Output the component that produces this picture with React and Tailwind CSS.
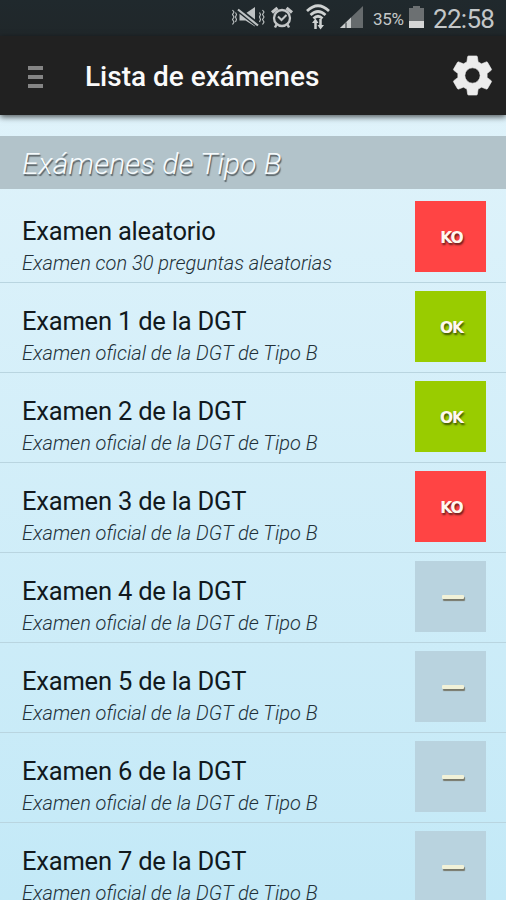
const exams = [
  { title: "Examen aleatorio", detail: "Examen con 30 preguntas aleatorias", result: "KO" },
  { title: "Examen 1 de la DGT", detail: "Examen oficial de la DGT de Tipo B", result: "OK" },
  { title: "Examen 2 de la DGT", detail: "Examen oficial de la DGT de Tipo B", result: "OK" },
  { title: "Examen 3 de la DGT", detail: "Examen oficial de la DGT de Tipo B", result: "KO" },
  { title: "Examen 4 de la DGT", detail: "Examen oficial de la DGT de Tipo B", result: null },
  { title: "Examen 5 de la DGT", detail: "Examen oficial de la DGT de Tipo B", result: null },
  { title: "Examen 6 de la DGT", detail: "Examen oficial de la DGT de Tipo B", result: null },
  { title: "Examen 7 de la DGT", detail: "Examen oficial de la DGT de Tipo B", result: null },
];

function MutedIcon() {
  return (
    <svg width="34" height="22" viewBox="0 0 34 22" fill="none" stroke="#bfc3c4">
      <path d="M1.500 3l1.500 2-1.500 2.500 1.500 2.500-1.500 2.500 1.500 2.500-1.500 2.500M4.500 5.500l1 2-1 2.500 1 2.500-1 2.500" strokeWidth="1.100" />
      <path d="M28.500 5.500l1 2-1 2.500 1 2.500-1 2.500M31.500 3l1.500 2-1.500 2.500 1.500 2.500-1.500 2.500 1.500 2.500-1.500 2.500" strokeWidth="1.100" />
      <path d="M8.500 6.500h6l9.500-6.500v19.500l-9.500-6h-6z" fill="#bfc3c4" stroke="none" />
      <path d="M6.500 2L27.500 18.500" stroke="#20292d" strokeWidth="5" />
      <path d="M7 2.500L27 18.500" strokeWidth="2.200" />
    </svg>
  );
}

function AlarmIcon() {
  return (
    <svg width="24" height="24" viewBox="0 0 24 24" fill="none" stroke="#c3c6c7" strokeWidth="2">
      <circle cx="12" cy="13" r="8" strokeWidth="2.300" />
      <path d="M2 7.500L7.500 3M22 7.500L16.500 3" strokeWidth="3.200" />
      <path d="M6.500 19.500l-1.500 3M17.500 19.500l1.500 3" strokeWidth="2.400" />
      <path d="M8 11.500l3.500 3.500 5-5" />
    </svg>
  );
}

function WifiIcon() {
  return (
    <svg width="24" height="26" viewBox="0 0 24 26" fill="none" stroke="#cfd2d2" strokeWidth="2.700">
      <path d="M1 7Q12-3.500 23 7M4.500 11Q12 4 19.500 11M7.500 14.500Q12 10 16.500 14.500" />
      <path d="M9.500 25v-8M14.500 15v8" strokeWidth="2.500" />
      <path d="M6 19l3.500-4.500 3 4.500zM11.500 21l3 4.500 3.500-4.500z" fill="#cfd2d2" stroke="none" />
    </svg>
  );
}

function SignalIcon() {
  return (
    <svg width="23" height="22" viewBox="0 0 23 22">
      <path d="M0 22L23 0v22z" fill="#666b6d" />
      <path d="M0 22L11 11.500v10.500z" fill="#c9cccc" />
      <path d="M6 16.500v5.500" stroke="#41474a" strokeWidth="1.200" />
    </svg>
  );
}

function BatteryIcon() {
  return (
    <svg width="15" height="22" viewBox="0 0 15 22">
      <path d="M4 0h7v2H15v20H0V2h4z" fill="#6c7072" />
      <path d="M0 15h15v7H0z" fill="#d5d6d6" />
    </svg>
  );
}

function GearIcon() {
  return (
    <svg width="47" height="47" viewBox="0 0 24 24" fill="#ececec">
      <path stroke="#ececec" strokeWidth="0.3" strokeLinejoin="round" d="M19.430 12.980c.04-.32.070-.64.070-.98s-.03-.66-.07-.98l2.110-1.650c.19-.15.240-.42.120-.64l-2-3.460c-.12-.22-.39-.3-.61-.22l-2.490 1c-.52-.4-1.080-.73-1.690-.98l-.38-2.650C14.460 2.180 14.250 2 14 2h-4c-.25 0-.46.180-.49.420l-.38 2.650c-.61.250-1.170.59-1.690.98l-2.490-1c-.23-.09-.49 0-.61.220l-2 3.460c-.13.220-.07.490.12.640l2.110 1.650c-.04.320-.07.650-.07.980s.03.660.07.980l-2.110 1.650c-.19.150-.24.420-.12.640l2 3.460c.12.220.39.300.61.220l2.490-1c.52.400 1.080.730 1.690.980l.38 2.650c.03.240.24.420.49.420h4c.25 0 .46-.18.49-.42l.38-2.650c.61-.25 1.170-.59 1.690-.98l2.490 1c.23.090.49 0 .61-.22l2-3.460c.12-.22.070-.49-.12-.64l-2.110-1.650zM12 15.900a3.900 3.900 0 1 1 0-7.800 3.900 3.900 0 0 1 0 7.800z" />
    </svg>
  );
}

function StatusBar() {
  return (
    <div className="flex h-9 shrink-0 items-start bg-gradient-to-b from-[#20292d] to-[#20272a] pl-[231px] text-[#c4c7c8]">
      <div className="mt-[7px]"><MutedIcon /></div>
      <div className="ml-[5px] mt-[5px]"><AlarmIcon /></div>
      <div className="ml-[12px] mt-[4px]"><WifiIcon /></div>
      <div className="ml-[10px] mt-[6px]"><SignalIcon /></div>
      <div className="ml-[10px] mt-[9px] w-[36px] whitespace-nowrap text-[17px] leading-5 tracking-[-0.3px]">35%</div>
      <div className="mt-[6px]"><BatteryIcon /></div>
      <div className="ml-[9px] mt-[4px] whitespace-nowrap text-[26px] leading-[30px] tracking-[-0.7px]">22:58</div>
    </div>
  );
}

function ActionBar() {
  return (
    <header className="relative flex h-[79px] shrink-0 items-center bg-[#212121] pl-7 pr-[10px] shadow-[0_2px_6px_rgba(0,0,0,0.65)]">
      <div className="mt-[2px] flex w-[15px] flex-col gap-[5px]">
        <span className="h-[4px] bg-[#858585]" />
        <span className="h-[4px] bg-[#858585]" />
        <span className="h-[4px] bg-[#858585]" />
      </div>
      <h1 className="ml-[42px] flex-1 whitespace-nowrap pt-[2px] text-[28px] font-medium leading-8 text-[#fafafa]">Lista de exámenes</h1>
      <GearIcon />
    </header>
  );
}

function ResultTile({ result }) {
  if (!result) {
    return (
      <div className="flex h-[71px] w-[71px] items-center justify-center bg-[#b9d3df]">
        <span className="ml-[5px] h-[4px] w-[22px] rounded-[1px] bg-[#f1f1d8] shadow-[1px_2px_1px_#77776a]" />
      </div>
    );
  }
  const color = result === "OK" ? "bg-[#99cc00]" : "bg-[#ff4444]";
  return (
    <div className={`flex h-[71px] w-[71px] items-center justify-center ${color}`}>
      <span className="ml-[2px] mt-[3px] font-['DejaVu_Sans',sans-serif] text-[15.5px] font-bold leading-5 tracking-[-1px] text-[#fff8f0] [text-shadow:1px_2px_2px_rgba(0,0,0,0.6)]">{result}</span>
    </div>
  );
}

function ExamRow({ exam }) {
  return (
    <li className="flex h-[90px] shrink-0 items-start justify-between border-b border-[#b9d5e0] pl-[22px] pr-5 pt-2">
      <div className="whitespace-nowrap pt-[13px]">
        <div className="text-[25.5px] leading-[34px] tracking-[-0.2px] text-[#11191d]">{exam.title}</div>
        <div className="text-[20px] font-light italic leading-[30px] text-[#223038]">{exam.detail}</div>
      </div>
      <ResultTile result={exam.result} />
    </li>
  );
}

export default function App() {
  return (
    <div className="flex h-[900px] w-[506px] flex-col overflow-hidden bg-gradient-to-b from-[#e3f4fb] to-[#c3e9f7] font-[Roboto,sans-serif]">
      <StatusBar />
      <ActionBar />
      <h2 className="mt-[21px] flex h-[53px] shrink-0 items-center bg-[#b2c3ca] pl-[22px] pt-[3px] text-[30px] font-light italic leading-9 text-[#f7fbfd] [text-shadow:1px_2px_1px_rgba(0,0,0,0.5)]">
        Exámenes de Tipo B
      </h2>
      <ul className="flex flex-col pt-[4px]">
        {exams.map((exam) => (
          <ExamRow key={exam.title} exam={exam} />
        ))}
      </ul>
    </div>
  );
}
